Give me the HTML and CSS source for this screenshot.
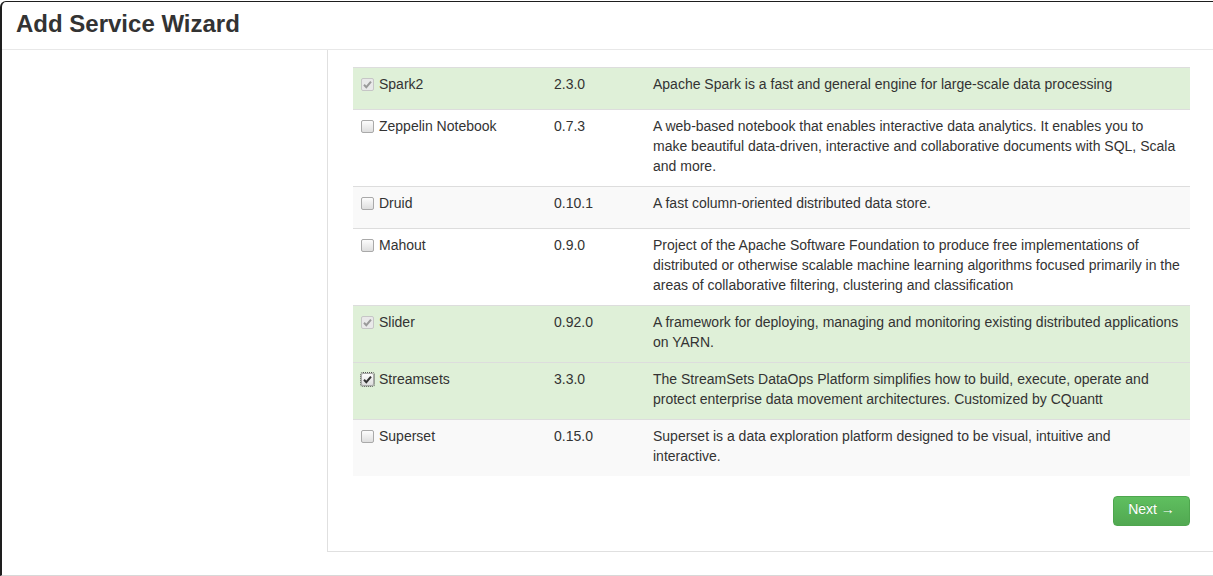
FILE: index.html
```html
<!DOCTYPE html>
<html>
<head>
<meta charset="utf-8">
<link rel="stylesheet" href="styles.css">
</head>
<body>
<div class="modal">
  <div class="modal-header"><h3>Add Service Wizard</h3></div>
  <div class="modal-body">
    <div class="sidebar"></div>
    <div class="panel">
      <table class="services">
        <colgroup><col class="c-name"><col class="c-ver"><col class="c-desc"></colgroup>
        <tbody>
          <tr class="success odd">
            <td><label class="chk"><span class="box disabled checked"><svg viewBox="0 0 13 13"><path d="M3 6.8 L5.3 9.2 L10 3.6" /></svg></span>Spark2</label></td>
            <td>2.3.0</td>
            <td class="desc">Apache Spark is a fast and general engine for large-scale data processing</td>
          </tr>
          <tr>
            <td><label class="chk"><span class="box"></span>Zeppelin Notebook</label></td>
            <td>0.7.3</td>
            <td class="desc">A web-based notebook that enables interactive data analytics. It enables you to make beautiful data-driven, interactive and collaborative documents with SQL, Scala and more.</td>
          </tr>
          <tr class="odd">
            <td><label class="chk"><span class="box"></span>Druid</label></td>
            <td>0.10.1</td>
            <td class="desc">A fast column-oriented distributed data store.</td>
          </tr>
          <tr>
            <td><label class="chk"><span class="box"></span>Mahout</label></td>
            <td>0.9.0</td>
            <td class="desc">Project of the Apache Software Foundation to produce free implementations of distributed or otherwise scalable machine learning algorithms focused primarily in the areas of collaborative filtering, clustering and classification</td>
          </tr>
          <tr class="success odd">
            <td><label class="chk"><span class="box disabled checked"><svg viewBox="0 0 13 13"><path d="M3 6.8 L5.3 9.2 L10 3.6" /></svg></span>Slider</label></td>
            <td>0.92.0</td>
            <td class="desc">A framework for deploying, managing and monitoring existing distributed applications on YARN.</td>
          </tr>
          <tr class="success">
            <td><label class="chk"><span class="box checked focus"><svg viewBox="0 0 13 13"><path d="M3 6.8 L5.3 9.2 L10 3.6" /></svg></span>Streamsets</label></td>
            <td>3.3.0</td>
            <td class="desc">The StreamSets DataOps Platform simplifies how to build, execute, operate and protect enterprise data movement architectures. Customized by CQuantt</td>
          </tr>
          <tr class="odd">
            <td><label class="chk"><span class="box"></span>Superset</label></td>
            <td>0.15.0</td>
            <td class="desc">Superset is a data exploration platform designed to be visual, intuitive and interactive.</td>
          </tr>
        </tbody>
      </table>
      <div class="actions">
        <button class="btn-success">Next &rarr;</button>
      </div>
    </div>
  </div>
</div>
</body>
</html>
```
FILE: styles.css
```css
html, body {
  margin: 0;
  padding: 0;
  background: #fff;
}
body {
  font-family: "Liberation Sans", Arial, sans-serif;
  font-size: 14px;
  line-height: 20px;
  color: #333;
  padding-top: 1px;
}
.modal {
  height: 573px;
  border-top: 1px solid #1e1e1e;
  border-left: 2px solid #1e1e1e;
  border-bottom: 1px solid #d8d8d8;
  border-top-left-radius: 6px;
  display: flex;
  flex-direction: column;
  overflow: hidden;
}
.modal-header {
  height: 47px;
  border-bottom: 1px solid #e8e8e8;
  padding: 0 14px;
  flex: none;
}
.modal-header h3 {
  margin: 0;
  font-size: 24px;
  font-weight: bold;
  line-height: 44px;
  color: #333;
}
.modal-body {
  display: flex;
  align-items: flex-start;
}
.sidebar {
  width: 325px;
  flex: none;
}
.panel {
  flex: 1;
  border-left: 1px solid #e0e0e0;
  border-bottom: 1px solid #e0e0e0;
  padding: 17px 23px 25px 25px;
}
.services {
  width: 837px;
  border-collapse: collapse;
  table-layout: fixed;
}
.c-name { width: 193px; }
.c-ver { width: 99px; }
.c-desc { width: 545px; }
.services td {
  border-top: 1px solid #ddd;
  padding: 6px 8px 10px;
  vertical-align: top;
  text-align: left;
}
.services td.desc {
  padding-right: 9px;
}
.services tr.odd td { background: #f9f9f9; }
.services tr.success td { background: #dff0d8; }
.chk {
  display: flex;
  align-items: center;
  height: 20px;
  padding-bottom: 5px;
}
.box {
  width: 11px;
  height: 11px;
  border: 1px solid #a9a9a9;
  border-radius: 2px;
  background: linear-gradient(#fcfcfc, #dedede);
  margin-right: 5px;
  margin-top: 1px;
  flex: none;
  display: inline-flex;
  position: relative;
}
.box svg {
  width: 13px;
  height: 13px;
  position: absolute;
  left: -1px;
  top: -1px;
}
.box svg path {
  fill: none;
  stroke: #333;
  stroke-width: 2;
}
.box.disabled {
  border-color: #c6c6c6;
  background: #e9e9e9;
}
.box.disabled svg path {
  stroke: #9a9a9a;
}
.box.focus {
  outline: 1px dotted #555;
  outline-offset: 0;
}
.actions {
  display: flex;
  justify-content: flex-end;
  padding-top: 20px;
}
.btn-success {
  font-family: "Liberation Sans", Arial, sans-serif;
  font-size: 14px;
  line-height: 20px;
  color: #fff;
  width: 77px;
  height: 30px;
  padding: 2px 12px 6px;
  border: 1px solid #4ea64e;
  border-radius: 4px;
  background: linear-gradient(#5fbf5f, #51a851);
  text-shadow: 0 -1px 0 rgba(0,0,0,0.15);
  cursor: pointer;
}
```
